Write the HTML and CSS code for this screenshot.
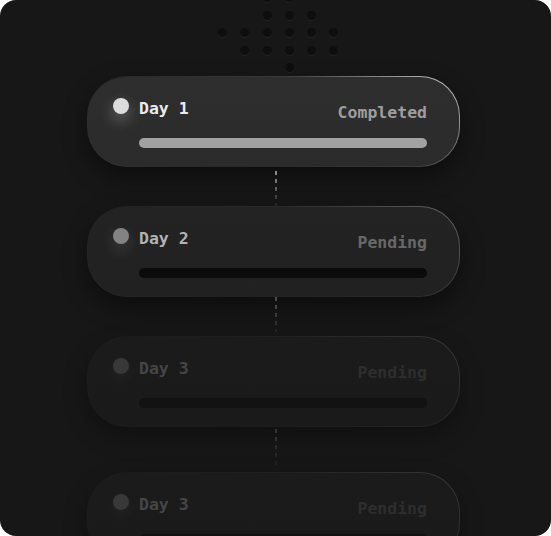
FILE: index.html
```html
<!DOCTYPE html>
<html>
<head>
<meta charset="utf-8">
<link rel="stylesheet" href="styles.css">
</head>
<body>
<div class="frame">
  <div class="dots">
    <i class="e"></i><i class="e"></i><i></i><i></i><i class="e"></i><i class="e"></i>
    <i class="e"></i><i class="e"></i><i></i><i></i><i></i><i class="e"></i>
    <i></i><i></i><i></i><i></i><i></i><i></i>
    <i class="e"></i><i></i><i></i><i></i><i></i><i></i>
    <i class="e"></i><i class="e"></i><i class="e"></i><i></i><i class="e"></i><i class="e"></i>
  </div>

  <div class="card done">
    <div class="head">
      <span class="dot"></span>
      <span class="day">Day 1</span>
      <span class="status">Completed</span>
    </div>
    <div class="bar"></div>
  </div>
  <div class="link l1"></div>
  <div class="card next">
    <div class="head">
      <span class="dot"></span>
      <span class="day">Day 2</span>
      <span class="status">Pending</span>
    </div>
    <div class="bar"></div>
  </div>
  <div class="link l2"></div>
  <div class="card far">
    <div class="head">
      <span class="dot"></span>
      <span class="day">Day 3</span>
      <span class="status">Pending</span>
    </div>
    <div class="bar"></div>
  </div>
  <div class="link l3"></div>
  <div class="card far last">
    <div class="head">
      <span class="dot"></span>
      <span class="day">Day 3</span>
      <span class="status">Pending</span>
    </div>
    <div class="bar"></div>
  </div>
</div>
</body>
</html>
```
FILE: styles.css
```css
html, body {
  margin: 0;
  padding: 0;
  background: #ffffff;
}

.frame {
  position: relative;
  width: 551px;
  height: 536px;
  background: #171717;
  border-radius: 16px;
  overflow: hidden;
  padding: 76px 0 0 87px;
  box-sizing: border-box;
  display: flex;
  flex-direction: column;
  font-family: "DejaVu Sans Mono", "Liberation Mono", monospace;
}

.dots {
  position: absolute;
  left: 218px;
  top: -7px;
  display: grid;
  grid-template-columns: repeat(6, 9px);
  grid-auto-rows: 9px;
  column-gap: 13.3px;
  row-gap: 8.5px;
}

.dots i {
  display: block;
  width: 9px;
  height: 9px;
  border-radius: 50%;
  background: #0e0e0e;
  box-shadow: 0 1px 0 rgba(255, 255, 255, 0.05);
}

.dots i.e {
  visibility: hidden;
}

.card {
  position: relative;
  width: 373px;
  height: 91px;
  box-sizing: border-box;
  border-radius: 40px;
  border: 1px solid transparent;
  padding: 22px 32px 0 25px;
  flex: none;
  box-shadow: 0 10px 24px rgba(0, 0, 0, 0.45);
}

.head {
  display: flex;
  align-items: flex-start;
}

.dot {
  width: 16px;
  height: 16px;
  border-radius: 50%;
  margin-top: -1px;
  flex: none;
}

.day {
  margin-left: 10px;
  font-size: 16.5px;
  line-height: 20px;
  font-weight: bold;
}

.status {
  margin-left: auto;
  margin-top: 4px;
  font-size: 16.5px;
  line-height: 20px;
  font-weight: bold;
}

.bar {
  height: 10px;
  margin: 15px 0 0 26px;
  border-radius: 5px;
}

/* completed */
.done {
  background:
    linear-gradient(180deg, #2e2e2e, #2b2b2b) padding-box,
    linear-gradient(215deg, rgba(235, 235, 235, 0.85), rgba(120, 120, 120, 0.35) 35%, rgba(70, 70, 70, 0.35) 70%, rgba(90, 90, 90, 0.4)) border-box;
}
.done .dot {
  background: #dcdcdc;
  box-shadow: 0 6px 14px 2px rgba(255, 255, 255, 0.2);
}
.done .day { color: #ebebeb; }
.done .status { color: #9e9e9e; }
.done .bar { background: #a2a2a2; }

/* next pending */
.next {
  background:
    linear-gradient(180deg, #232323, #212121) padding-box,
    linear-gradient(215deg, rgba(150, 150, 150, 0.6), rgba(70, 70, 70, 0.4) 35%, rgba(45, 45, 45, 0.5) 70%, rgba(55, 55, 55, 0.5)) border-box;
}
.next .dot {
  background: #838383;
  box-shadow: 0 6px 14px 2px rgba(255, 255, 255, 0.09);
}
.next .day { color: #b3b3b3; }
.next .status { color: #686868; }
.next .bar { background: #0b0b0b; }

/* far pending */
.far {
  background:
    linear-gradient(180deg, #1b1b1b, #1a1a1a) padding-box,
    linear-gradient(215deg, rgba(70, 70, 70, 0.7), rgba(40, 40, 40, 0.6) 35%, rgba(30, 30, 30, 0.6) 70%, rgba(32, 32, 32, 0.6)) border-box;
  box-shadow: 0 10px 24px rgba(0, 0, 0, 0.3);
}
.far .dot {
  background: #383838;
  box-shadow: 0 6px 14px 2px rgba(255, 255, 255, 0.035);
}
.far .day { color: #464646; }
.far .status { color: #2e2e2e; }
.far .bar { background: #121212; }

/* connectors */
.link {
  flex: none;
  width: 2px;
  margin-left: 188px;
  background: repeating-linear-gradient(180deg, transparent 0 4px, var(--c) 4px 8px);
  -webkit-mask-image: linear-gradient(180deg, #000 20%, rgba(0, 0, 0, 0.15));
  mask-image: linear-gradient(180deg, #000 20%, rgba(0, 0, 0, 0.15));
}
.l1 { height: 39px; --c: #8a8a8a; }
.l2 { height: 39px; --c: #4a4a4a; background-position: 0 -4px; }
.l3 { height: 45px; --c: #333333; background-position: 0 -2px; }
```
